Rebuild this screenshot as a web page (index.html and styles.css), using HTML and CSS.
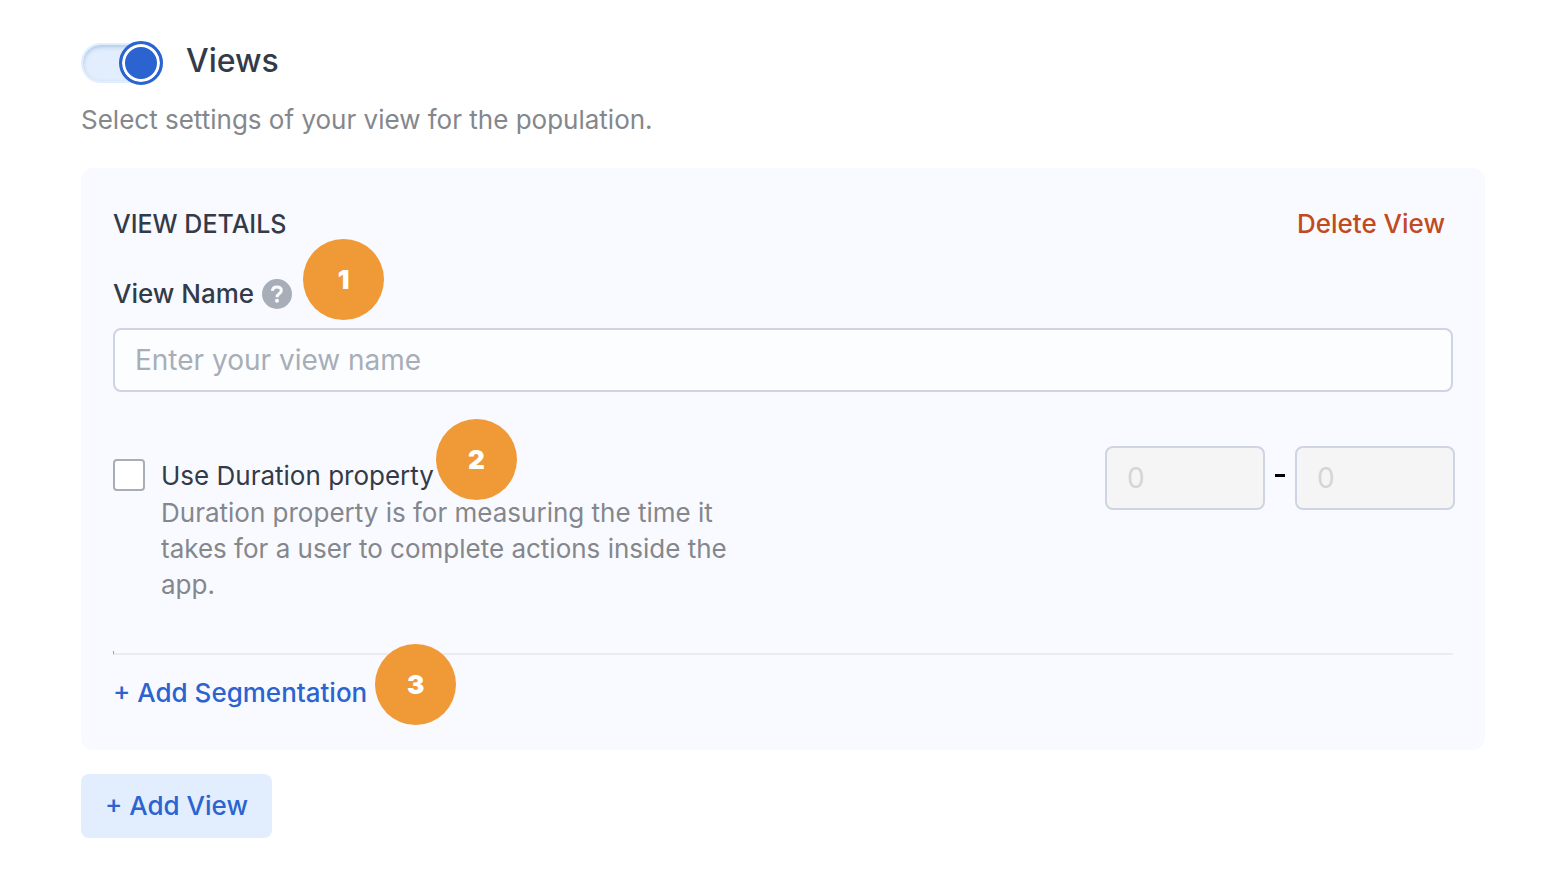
FILE: index.html
```
<!DOCTYPE html>
<html lang="en">
<head>
<meta charset="utf-8">
<meta name="viewport" content="width=device-width, initial-scale=1">
<title>Views</title>
<link rel="stylesheet" href="styles.css">
</head>
<body>
<main class="page">
  <header class="page-header">
    <input class="switch" type="checkbox" role="switch" id="views-switch" checked>
    <label class="page-title" for="views-switch">Views</label>
  </header>
  <p class="intro">Select settings of your view for the population.</p>

  <section class="panel">
    <div class="panel-header">
      <h2 class="panel-title">VIEW DETAILS</h2>
      <button class="text-button danger" type="button">Delete View</button>
    </div>

    <div class="name-label">
      <label for="view-name">View Name</label>
      <svg class="help" viewBox="0 0 30 30" aria-hidden="true">
        <circle cx="15" cy="15" r="15" fill="#a7aeb8"/>
        <path d="M10.4 11.8C10.6 9.2 12.3 7.9 14.8 7.9c2.8 0 4.5 1.4 4.5 3.6 0 1.6-.9 2.4-2.2 3.3-1.5 1-2 1.6-2 3.4" fill="none" stroke="#fafbff" stroke-width="3"/>
        <circle cx="15" cy="21.8" r="2" fill="#fafbff"/>
      </svg>
      <span class="marker marker-name">1</span>
    </div>
    <input class="field name-field" id="view-name" type="text" placeholder="Enter your view name">

    <div class="duration">
      <input class="checkbox" type="checkbox" id="duration" aria-describedby="duration-help">
      <div class="duration-text">
        <div class="duration-label">
          <label for="duration">Use Duration property</label>
          <span class="marker marker-duration">2</span>
        </div>
        <p class="duration-help" id="duration-help">Duration property is for measuring the time it takes for a user to complete actions inside the app.</p>
      </div>
      <div class="range">
        <input class="field range-field" type="text" placeholder="0" aria-label="Minimum duration" disabled>
        <span class="dash"></span>
        <input class="field range-field" type="text" placeholder="0" aria-label="Maximum duration" disabled>
      </div>
    </div>

    <hr class="divider">
    <div class="segmentation">
      <button class="text-button primary" type="button">+ Add Segmentation</button>
      <span class="marker marker-segmentation">3</span>
    </div>
  </section>

  <button class="add-view" type="button">+ Add View</button>
</main>
</body>
</html>
```
FILE: styles.css
```
*,
*::before {
  box-sizing: border-box;
}

body {
  margin: 0;
  background: #fff;
  color: #333b49;
  font-family: Inter, "Liberation Sans", sans-serif;
  font-size: 26px;
  line-height: 36px;
}

h2,
p {
  margin: 0;
  font-size: inherit;
  font-weight: 400;
}

button,
input {
  margin: 0;
  font: inherit;
}

.page {
  padding: 40px 73px 32px 81px;
}

.page-header {
  display: flex;
  align-items: center;
  gap: 23px;
}

.switch {
  appearance: none;
  display: flex;
  align-items: center;
  justify-content: flex-end;
  width: 82px;
  height: 40px;
  margin: 3px 0;
  border: 2px solid #e2eefd;
  border-radius: 20px;
  background: #e2eefd;
  box-shadow: inset 0 2px 4px #abc5e6;
}

.switch::before {
  content: "";
  flex: none;
  width: 44px;
  height: 44px;
  margin-right: -2px;
  border: 3px solid #2b64d0;
  border-radius: 50%;
  background: #2b64d0;
  box-shadow: inset 0 0 0 3px #fff;
}

.page-title {
  padding-bottom: 4px;
  font-size: 32px;
  font-weight: 500;
  line-height: 40px;
}

.intro {
  margin-top: 16px;
  color: #84878c;
}

.panel {
  margin-top: 30px;
  padding: 32px;
  border-radius: 12px;
  background: #f9faff;
}

.panel-header {
  display: flex;
  align-items: center;
  justify-content: space-between;
  height: 48px;
  padding-right: 8px;
}

.panel-title {
  font-size: 25px;
  font-weight: 500;
}

.text-button {
  padding: 0;
  border: 0;
  background: none;
  font-weight: 500;
}

.danger {
  color: #c24a20;
}

.primary {
  color: #2b64d0;
}

.name-label {
  position: relative;
  display: flex;
  align-items: center;
  gap: 8px;
  width: max-content;
  margin-top: 28px;
  font-weight: 500;
}

.help {
  width: 30px;
  height: 30px;
}

.marker {
  position: absolute;
  left: 100%;
  display: grid;
  place-items: center;
  width: 81px;
  height: 81px;
  border-radius: 50%;
  background: #f09937;
  color: #fff;
  font-weight: 900;
}

.marker-name {
  top: -37px;
  margin-left: 11px;
}

.marker-duration {
  top: -39px;
  margin-left: 2px;
}

.marker-segmentation {
  top: -31px;
  margin-left: 8px;
}

.field {
  height: 64px;
  padding: 0 20px;
  border: 2px solid #ced4e3;
  border-radius: 8px;
  background: #fcfdff;
  color: #333b49;
  font-size: 28px;
}

.field::placeholder {
  color: #a7aeb8;
  opacity: 1;
}

.name-field {
  display: block;
  width: 100%;
  margin-top: 16px;
}

.duration {
  display: flex;
  align-items: flex-start;
  margin-top: 54px;
}

.checkbox {
  appearance: none;
  flex: none;
  width: 32px;
  height: 32px;
  margin: 13px 16px 0 0;
  border: 2px solid #a7aeb8;
  border-radius: 4px;
  background: #fff;
}

.checkbox:checked {
  background: #2b64d0;
}

.duration-text {
  max-width: 600px;
  padding-top: 12px;
}

.duration-label {
  position: relative;
  width: max-content;
}

.duration-help {
  margin-top: 1px;
  color: #84878c;
}

.range {
  display: flex;
  align-items: center;
  gap: 10px;
  margin-right: -2px;
  margin-left: auto;
}

.range-field {
  width: 160px;
  background: #f5f5f5;
}

.range-field::placeholder {
  color: #d5d5d5;
}

.dash {
  width: 10px;
  height: 3px;
  margin-bottom: 6px;
  background: #000;
}

.divider {
  height: 4px;
  margin: 48px 0 20px;
  border: 0;
  border-bottom: 2px solid #ebecef;
  border-left: 1px solid #9a9a9a;
}

.segmentation {
  position: relative;
  width: max-content;
  height: 43px;
}

.add-view {
  margin-top: 24px;
  padding: 14px 24px;
  border: 0;
  border-radius: 8px;
  background: #e2eefd;
  color: #2b64d0;
  font-weight: 500;
}
```
